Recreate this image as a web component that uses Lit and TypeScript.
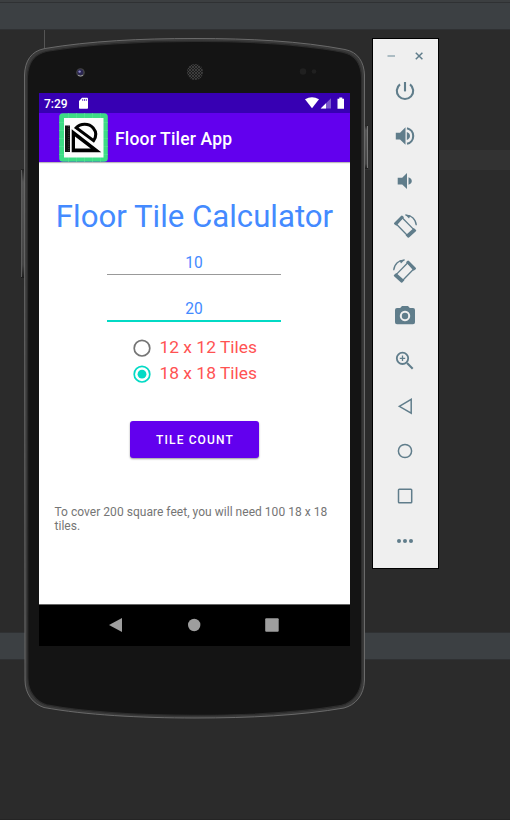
import { LitElement, html, css, svg } from "lit";
import { customElement } from "lit/decorators.js";

const body =
  "M24.5 75C25 61 31 51 45 48.5C90 41 140 38.5 195 38.5C250 38.5 300 41 345 49.5C358 52 364 62 364.5 75V680C364 696 355 705 344 708C300 715.5 250 718 195 718C140 718 85 715 44 707.5C33 704 25 694 25 680Z";

const rotate = svg`<path class="thin" d="M3 9.8 9.2 3.7 21.6 16.4 15.2 22.3Z" /><path class="fill" d="M1 10Q.8 9.3 1.5 8.6L8 2Q8.9 1.2 9.8 2L11 3.2 3.4 11.8ZM14.7 23.4 12.6 21.2 20.8 13.9 23 16Q23.6 16.6 22.9 17.3L16.3 23.3Q15.5 24 14.7 23.4Z" /><path class="thin" d="M12.5 1.2C18 .9 22.8 5 23.3 11.3" /><path class="fill" d="M12 .6 17.5 1.6 16 4.4Z" />`;

const tools = [
  svg`<path d="M12 3v9.4" /><path d="M7 5.3a8.2 8.2 0 1 0 10 0" />`,
  svg`<path class="fill" d="M2.8 8.7H7L12.5 3.3V20.7L7 15.4H2.8Z" /><path class="fill" d="M13.8 8.1Q17 9.3 17 12T13.8 16Z" /><path d="M14 4.2a8 8 0 0 1 0 15.6" />`,
  svg`<path class="fill" d="M4.7 8.7h4.5L14 4v16l-4.8-4.6H4.7Z" /><path class="fill" d="M15.5 8.2Q18.8 9.5 18.8 12T15.5 15.8Z" />`,
  svg`<g>${rotate}</g>`,
  svg`<g transform="matrix(-1 0 0 1 24 0)">${rotate}</g>`,
  svg`<path class="fill" fill-rule="evenodd" d="M4 4h3.2L9 2h6l1.8 2H20a2 2 0 0 1 2 2v12.2a2 2 0 0 1-2 2H4a2 2 0 0 1-2-2V6a2 2 0 0 1 2-2ZM12 6.8a5.2 5.2 0 1 0 .01 0Z" /><circle class="fill" cx="12" cy="12" r="3.2" />`,
  svg`<circle class="lens" cx="9.5" cy="9.3" r="5.7" /><path d="m14 14 5.7 5.7" /><path class="thin" d="M9.5 6.6v5.4M6.8 9.3h5.4" />`,
  svg`<path class="mid" d="M6.3 12.3 18.2 5.4V19.2Z" />`,
  svg`<circle class="mid" cx="12" cy="12" r="6.6" />`,
  svg`<rect class="mid" x="5.5" y="5.3" width="13.2" height="13.4" rx=".8" />`,
  svg`<circle class="fill" cx="6" cy="12" r="2" /><circle class="fill" cx="12" cy="12" r="2" /><circle class="fill" cx="18" cy="12" r="2" />`,
];

@customElement("emulator-tools")
export class EmulatorTools extends LitElement {
  static styles = css`
    :host { display: block; box-sizing: border-box; width: 67px; height: 531px; border: 1px solid #000; background: #efefef; color: #607d8b; }
    .window { display: block; width: 65px; height: 29px; }
    .list { display: grid; grid-auto-rows: 45px; justify-items: center; align-items: center; padding-right: 1px; }
    svg { display: block; fill: none; stroke: currentColor; }
    .tool { width: 24px; height: 24px; stroke-width: 2.1; overflow: visible; }
    .fill { fill: currentColor; stroke: none; }
    .lens { stroke-width: 1.8; }
    .mid { stroke-width: 1.5; }
    .thin { stroke-width: 1.3; }
  `;
  render() {
    return html`
      <svg class="window" viewBox="0 0 65 29">
        <path d="M14.5 17H22" stroke="#9bafb8" stroke-width="1.6" />
        <path d="m42.8 13.7 6.6 6.6m0-6.6-6.6 6.6" stroke-width="1.5" />
      </svg>
      <div class="list">
        ${tools.map((t) => html`<svg class="tool" viewBox="0 0 24 24">${t}</svg>`)}
      </div>
    `;
  }
}

@customElement("phone-screen")
export class PhoneScreen extends LitElement {
  static styles = css`
    :host { display: flex; flex-direction: column; width: 311px; height: 553px; background: #fff; font-family: Roboto, sans-serif; overflow: hidden; }
    svg { display: block; }
    .status { height: 20px; flex: none; background: #3700b3; color: #fff; display: flex; align-items: center; padding: 0 5px; font: 500 12px/20px Roboto, sans-serif; }
    .clock { width: 35px; padding-top: 1px; }
    .signals { margin-left: auto; }
    .bar { height: 48.5px; flex: none; background: #6200ee; color: #fff; display: flex; align-items: center; padding-left: 20px; gap: 7px; box-shadow: 0 1px 1px #bbb; }
    .name { font: 500 17.5px/24px Roboto, sans-serif; white-space: nowrap; padding-top: 3px; letter-spacing: 0.17px; }
    .page { flex: 1; display: flex; flex-direction: column; align-items: center; }
    h1 { margin: 34.5px 0 0; font: 400 31.2px/42px Roboto, sans-serif; color: #448aff; white-space: nowrap; }
    .field { width: 174px; height: 24px; box-sizing: border-box; position: relative; left: -0.5px; margin-top: 13px; border-bottom: 1px solid #999; text-align: center; color: #448aff; font: 400 15.6px/26px Roboto, sans-serif; }
    .length { height: 25px; margin-top: 12px; }
    .width { height: 26px; margin-top: 21px; border-bottom: 2px solid #03dac5; }
    .choices { margin-top: 13px; padding-left: 1.5px; display: grid; grid-auto-rows: 26px; align-items: center; }
    .choice { display: flex; align-items: center; gap: 8px; color: #ff5252; font: 400 17.4px/26px Roboto, sans-serif; white-space: nowrap; letter-spacing: 0.03px; }
    .choice span { margin-top: -3px; }
    .button { width: 128.5px; height: 37px; margin: 34px 0 0; border: 0; padding: 0 0 0 1px; border-radius: 3px; background: #6200ee; color: #fff; font: 500 12px/39px Roboto, sans-serif; letter-spacing: 1.12px; text-align: center; box-shadow: 0 1px 2px #0006; }
    .result { align-self: stretch; margin: 47px 15px 0 15.5px; color: #757575; font: 400 12px/14px Roboto, sans-serif; letter-spacing: 0.03px; }
    .line { display: block; white-space: nowrap; }
    .nav { height: 42px; flex: none; box-sizing: border-box; border-top: 1px solid #656565; background: #000; }
  `;
  radio(on: boolean, label: string) {
    const ink = on ? "#03dac5" : "#757575";
    return html`<div class="choice">
      <svg width="18" height="18" viewBox="0 0 18 18">
        <circle cx="9" cy="9.2" r="7.8" fill="none" stroke=${ink} stroke-width="1.7" />
        ${on ? svg`<circle cx="9" cy="9.2" r="4.4" fill=${ink} />` : ""}
      </svg><span>${label}</span>
    </div>`;
  }
  render() {
    return html`
      <div class="status">
        <span class="clock">7:29</span>
        <svg width="9" height="12" viewBox="0 0 9 12"><path fill="#fff" d="M3 .8H8.3Q9 .8 9 1.5V11Q9 11.8 8.2 11.8H.8Q0 11.8 0 11V4Z" /><path stroke="#3700b3" stroke-width=".7" d="M3.7 2v2M5.5 2v2M7.3 2v2" /></svg>
        <svg class="signals" width="40" height="12" viewBox="0 0 40 12">
          <path fill="#fff" d="M0 2.2Q7 -1.8 14 2.2L7 11.2Z" />
          <path fill="#fff" opacity=".35" d="M26 1.2V11.5H15.7Z" />
          <path fill="#fff" d="M21 6.2v5.3h-5.3Z" />
          <path fill="#fff" d="M32.5 1.8h1.8V.5h3v1.3H39V11.8H32.5Z" />
        </svg>
      </div>
      <div class="bar">
        <svg width="49" height="49" viewBox="0 0 49 49">
          <rect x=".2" y=".2" width="48.6" height="48.6" rx="3.6" fill="#3ddc84" />
          <path d="M9.5 0v49M17.5 0v49M25.5 0v49M33.5 0v49M41.5 0v49M0 9.5h49M0 17.5h49M0 25.5h49M0 33.5h49M0 41.5h49" stroke="#55e093" stroke-width=".7" />
          <path fill="#fcfcfc" d="M5 5h39.5v39.5H5Z" />
          <path fill="#111" d="M6 12.5h5V39H6Z" />
          <path stroke="#555" stroke-width=".8" stroke-dasharray="1 1.2" d="M9.8 13v25" />
          <path fill="#000" fill-rule="evenodd" d="M12.7 16.3 42.3 39.2H12.7ZM16 23.4V35.6H31.7Z" />
          <path fill="none" stroke="#000" stroke-width="3" d="M17.2 14.7C21.5 10 30 10 34.2 15C37.5 19 37.5 23.5 34.6 27.7Z" />
        </svg>
        <span class="name">Floor Tiler App</span>
      </div>
      <div class="page">
        <h1>Floor Tile Calculator</h1>
        <div class="field length">10</div>
        <div class="field width">20</div>
        <div class="choices">${this.radio(false, "12 x 12 Tiles")}${this.radio(true, "18 x 18 Tiles")}</div>
        <button class="button">TILE COUNT</button>
        <div class="result">
          <span class="line">To cover 200 square feet, you will need 100 18 x 18</span>
          <span class="line">tiles.</span>
        </div>
      </div>
      <div class="nav">
        <svg width="311" height="41" viewBox="0 0 311 41" fill="#9e9e9e">
          <path d="M70 20 83 13V27Z" />
          <circle cx="155.2" cy="20" r="6.2" />
          <rect x="226.2" y="13.3" width="13.5" height="13.5" rx="1" />
        </svg>
      </div>
    `;
  }
}

@customElement("app-root")
export class AppRoot extends LitElement {
  static styles = css`
    :host { display: block; position: relative; width: 510px; height: 820px; overflow: hidden; background: #2b2b2b; }
    .editor { display: grid; grid-template-rows: 2px 1px 26px 1px 120px 20px 462px 1px 26px 1px 159px 1px; height: 820px; }
    .edge { background: #3c3f41; }
    .rule { background: #2f3133; }
    .tab { background: #3c4043; }
    .code { padding-left: 44px; }
    .code::before { content: ""; display: block; width: 1px; height: 30px; background: #555; }
    .current { background: #323232; }
    .foot { background: #242424; }
    .phone { position: absolute; left: 0; top: 0; width: 372px; height: 730px; box-sizing: border-box; padding: 93px 0 0 39px; }
    .case { position: absolute; left: 0; top: 0; }
    phone-screen { position: relative; }
    emulator-tools { position: absolute; left: 372px; top: 38px; }
  `;
  render() {
    return html`
      <div class="editor">
        <div class="edge"></div><div class="rule"></div><div class="tab"></div><div class="rule"></div>
        <div class="code"></div><div class="current"></div><div></div>
        <div class="rule"></div><div class="tab"></div><div class="rule"></div><div></div><div class="foot"></div>
      </div>
      <div class="phone">
        <svg class="case" width="372" height="730" viewBox="0 0 372 730">
          <defs>
            <pattern id="mesh" width="3" height="3" patternUnits="userSpaceOnUse"><rect width="3" height="3" fill="#1c1c1c" /><circle cx="1" cy="1" r=".8" fill="#626262" /><circle cx="2.5" cy="2.5" r=".6" fill="#4a4a4a" /></pattern>
            <linearGradient id="key" x2="0" y2="1"><stop stop-color="#222" /><stop offset=".12" stop-color="#555" /><stop offset=".88" stop-color="#444" /><stop offset="1" stop-color="#1c1c1c" /></linearGradient>
          </defs>
          <rect x="21" y="169" width="4" height="109" fill="url(#key)" />
          <path d="M21.5 170V277" stroke="#5c5c5c" />
          <rect x="364" y="125" width="4" height="44" fill="url(#key)" />
          <path d="M367.5 126V168" stroke="#777" />
          <path d=${body} fill="#3a3a3a" stroke="#6a6a6a" />
          <path d=${body} fill="#141414" stroke="#2c2c2c" stroke-width="1.2" transform="translate(3.3 3.1) scale(.983 .992)" />
          <circle cx="80.5" cy="72.5" r="4.3" fill="#444" /><circle cx="80.3" cy="72.3" r="3" fill="#2a2650" /><circle cx="79.6" cy="71.6" r="1.2" fill="#8b87c8" /><path d="M78 75.3q2.5 1.5 5 0" fill="none" stroke="#999" />
          <circle cx="195" cy="72" r="8" fill="url(#mesh)" />
          <circle cx="303" cy="71.5" r="3.2" fill="#202020" /><circle cx="314" cy="71.5" r="2.3" fill="#202020" />
        </svg>
        <phone-screen></phone-screen>
      </div>
      <emulator-tools></emulator-tools>
    `;
  }
}
